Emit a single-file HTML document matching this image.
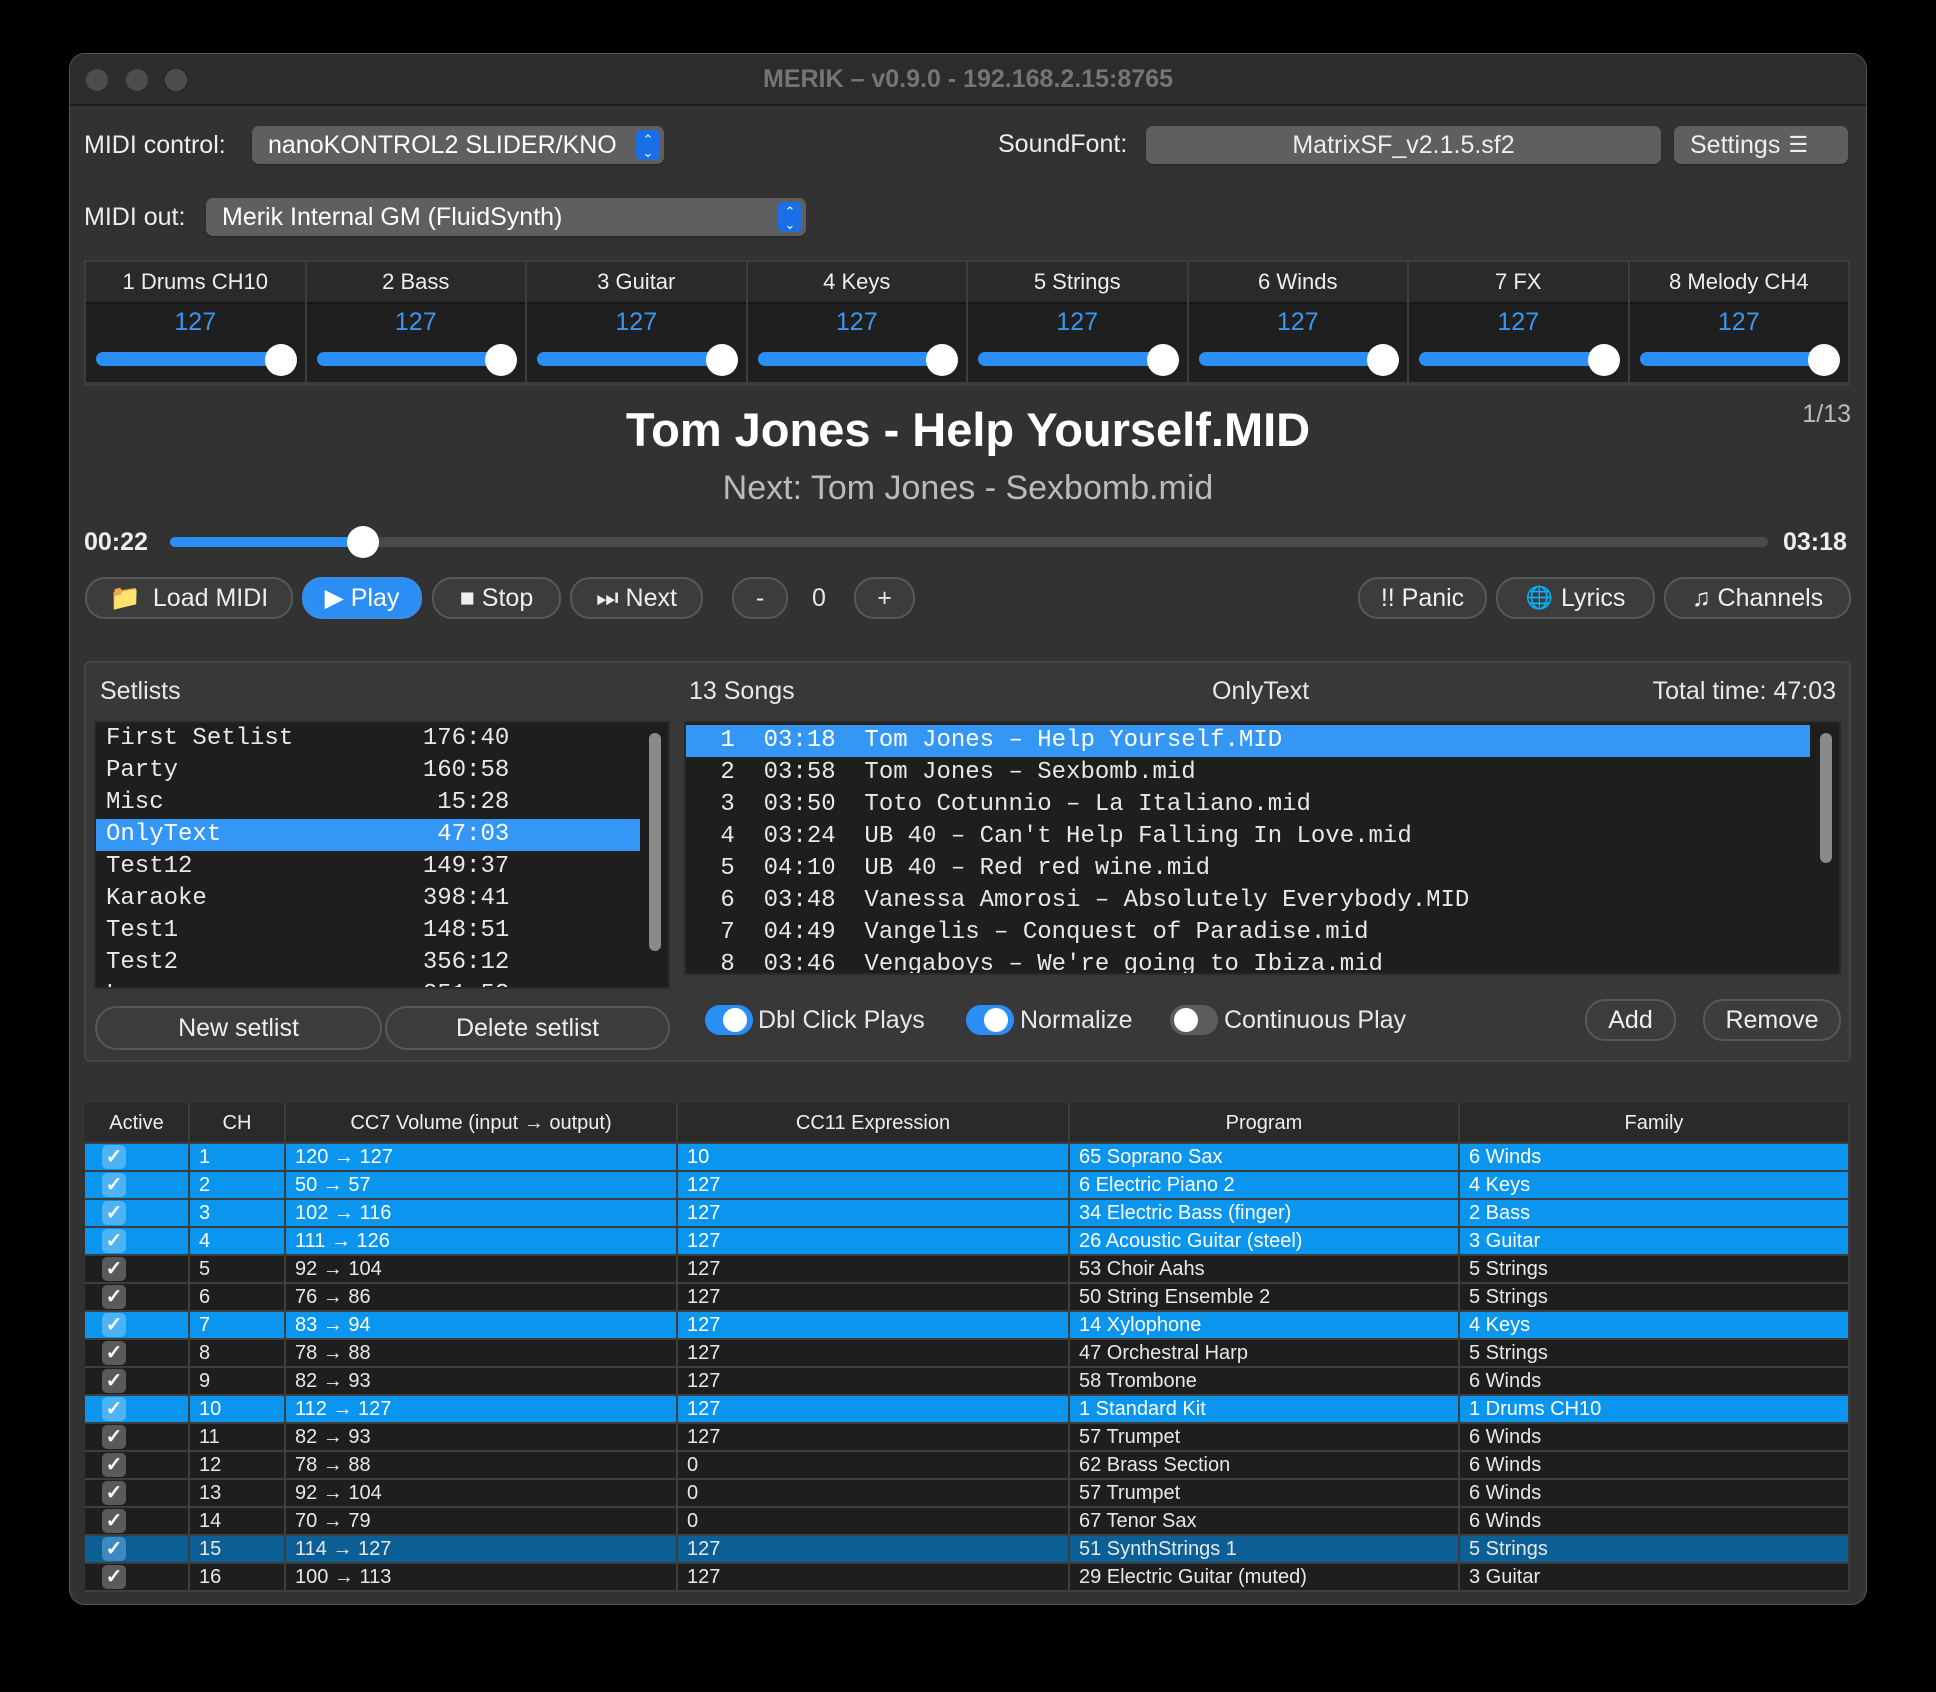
<!DOCTYPE html>
<html><head><meta charset="utf-8"><style>
*{box-sizing:border-box;margin:0;padding:0}
body{width:1936px;height:1692px;background:#000;font-family:"Liberation Sans",sans-serif;color:#e8e8e8;position:relative;overflow:hidden}
.a{position:absolute}
.win{left:69px;top:53px;width:1798px;height:1552px;background:#323232;border-radius:16px;border:1px solid #555;overflow:hidden}
.tb{left:0;top:0;width:100%;height:52px;background:#2c2c2c;border-bottom:2px solid #1a1a1a}
.dot{width:22px;height:22px;border-radius:50%;background:#4d4d4d;top:15px}
.lbl{font-size:25px;color:#eee}
.dd{background:#5f5f5f;border-radius:7px;font-size:25px;color:#fff;padding-left:16px;display:flex;align-items:center;box-shadow:0 1px 1px #222}
.arr{position:absolute;right:4px;top:4px;width:24px;bottom:4px;background:#1a6ee8;border-radius:5px;color:#fff;font-size:13px;line-height:13px;text-align:center;padding-top:3px}
.btn{border:2px solid #585858;border-radius:20px;background:#3c3c3c;font-size:25px;color:#eee;display:flex;align-items:center;justify-content:center}
.mono{font-family:"Liberation Mono",monospace;font-size:24px;white-space:pre}
.row{position:absolute;left:0;height:32px;line-height:32px;width:100%;padding-left:10px}
table{border-collapse:collapse;position:absolute;left:85px;top:1103px;width:1765px;font-size:20px}
td,th{border-right:2px solid #3d3d3d;border-bottom:2px solid #3d3d3d;padding:0 9px;height:28px;line-height:24px;text-align:left;white-space:nowrap}
th{height:40px;background:#2a2a2a;font-weight:normal;text-align:center;color:#eee}
tr.b td{background:#0a95ee;color:#fff}
tr.d td{background:#1e1e1e}
tr.c td{background:#0c5f94}
td:first-child{padding-left:17px}
.ck{display:inline-block;width:24px;height:24px;border-radius:5px;background:#5a5a5a;color:#fff;text-align:center;line-height:24px;font-size:20px;font-weight:bold}
tr.b .ck{background:#4db3f5}
tr.c .ck{background:#3d8ac0}
.tg{width:48px;height:30px;border-radius:15px;background:#2b8ef5}
.tg i{position:absolute;left:4px;top:3px;width:24px;height:24px;border-radius:50%;background:#fff}
</style></head><body>
<div class="a win">
 <div class="a tb"></div>
 <div class="a dot" style="left:16px"></div><div class="a dot" style="left:56px"></div><div class="a dot" style="left:95px"></div>
 <div class="a" style="left:0;width:100%;top:11px;text-align:center;font-size:25px;font-weight:bold;color:#757575">MERIK – v0.9.0 - 192.168.2.15:8765</div>
</div>
<div class="a lbl" style="left:84px;top:131px">MIDI control:</div>
<div class="a dd" style="left:252px;top:126px;width:412px;height:38px">nanoKONTROL2 SLIDER/KNO<div class="arr">⌃<br>⌄</div></div>
<div class="a lbl" style="left:998px;top:130px">SoundFont:</div>
<div class="a dd" style="left:1146px;top:126px;width:515px;height:38px;justify-content:center;padding:0;color:#eee">MatrixSF_v2.1.5.sf2</div>
<div class="a dd" style="left:1674px;top:126px;width:174px;height:38px;color:#eee">Settings <span style="margin-left:8px;font-size:22px">☰</span></div>
<div class="a lbl" style="left:84px;top:203px">MIDI out:</div>
<div class="a dd" style="left:206px;top:198px;width:600px;height:38px">Merik Internal GM (FluidSynth)<div class="arr">⌃<br>⌄</div></div>
<div class="a" style="left:84px;top:260px;width:1766px;height:126px;background:#1f1f1f;border:2px solid #3d3d3d;border-bottom:4px solid #3d3d3d">
<div class="a" style="left:0;top:0;width:100%;height:42px;background:#2a2a2a;border-bottom:2px solid #151515"></div>
</div>
<div class="a" style="left:0;width:1936px;top:402px;text-align:center;font-size:47px;font-weight:bold;color:#fff">Tom Jones - Help Yourself.MID</div>
<div class="a" style="left:0;width:1936px;top:469px;text-align:center;font-size:34px;color:#bbb">Next: Tom Jones - Sexbomb.mid</div>
<div class="a" style="right:85px;top:400px;font-size:25px;color:#bbb">1/13</div>
<div class="a" style="left:84px;top:528px;font-size:25px;font-weight:bold;color:#eee">00:22</div>
<div class="a" style="left:1783px;top:528px;font-size:25px;font-weight:bold;color:#eee">03:18</div>
<div class="a" style="left:170px;top:537px;width:1598px;height:10px;border-radius:5px;background:#4a4a4a"></div>
<div class="a" style="left:170px;top:537px;width:195px;height:10px;border-radius:5px;background:#2b8ef5"></div>
<div class="a" style="left:347px;top:526px;width:32px;height:32px;border-radius:50%;background:#fff"></div>
<div class="a btn" style="left:85px;top:577px;width:208px;height:42px"><span style="color:#9aa;margin-right:12px">📁</span>Load MIDI</div>
<div class="a btn" style="left:302px;top:577px;width:120px;height:42px;background:#2b8ef5;border-color:#3a8ee0;color:#fff">▶ Play</div>
<div class="a btn" style="left:432px;top:577px;width:129px;height:42px">■ Stop</div>
<div class="a btn" style="left:570px;top:577px;width:133px;height:42px">⏭ Next</div>
<div class="a btn" style="left:732px;top:577px;width:56px;height:42px">-</div>
<div class="a" style="left:812px;top:584px;font-size:25px">0</div>
<div class="a btn" style="left:854px;top:577px;width:61px;height:42px">+</div>
<div class="a btn" style="left:1358px;top:577px;width:129px;height:42px">!! Panic</div>
<div class="a btn" style="left:1496px;top:577px;width:159px;height:42px"><span style="font-size:22px;margin-right:8px">🌐</span>Lyrics</div>
<div class="a btn" style="left:1664px;top:577px;width:187px;height:42px">♫ Channels</div>
<div class="a" style="left:84px;top:661px;width:1767px;height:401px;background:#383838;border:2px solid #444;border-radius:6px"></div>
<div class="a" style="left:100px;top:677px;font-size:25px">Setlists</div>
<div class="a" style="left:689px;top:677px;font-size:25px">13 Songs</div>
<div class="a" style="left:1212px;top:677px;font-size:25px">OnlyText</div>
<div class="a" style="right:100px;top:677px;font-size:25px">Total time: 47:03</div>
<div class="a mono" style="left:94px;top:721px;width:576px;height:268px;background:#1e1e1e;border:2px solid #2a2a2a;overflow:hidden">
<div class="row" style="top:0">First Setlist         176:40</div>
<div class="row" style="top:32px">Party                 160:58</div>
<div class="row" style="top:64px">Misc                   15:28</div>
<div class="row" style="top:96px;background:#3597f5;width:544px;color:#fff">OnlyText               47:03</div>
<div class="row" style="top:128px">Test12                149:37</div>
<div class="row" style="top:160px">Karaoke               398:41</div>
<div class="row" style="top:192px">Test1                 148:51</div>
<div class="row" style="top:224px">Test2                 356:12</div>
<div class="row" style="top:256px">L                     351:52</div>
<div class="a" style="left:553px;top:10px;width:12px;height:218px;border-radius:6px;background:#8a8a8a"></div>
</div>
<div class="a mono" style="left:684px;top:721px;width:1157px;height:254px;background:#1e1e1e;border:2px solid #2a2a2a;overflow:hidden">
<div class="row" style="top:2px;background:#3597f5;width:1124px;color:#fff;padding-left:20px"> 1  03:18  Tom Jones – Help Yourself.MID</div>
<div class="row" style="top:34px;padding-left:20px"> 2  03:58  Tom Jones – Sexbomb.mid</div>
<div class="row" style="top:66px;padding-left:20px"> 3  03:50  Toto Cotunnio – La Italiano.mid</div>
<div class="row" style="top:98px;padding-left:20px"> 4  03:24  UB 40 – Can't Help Falling In Love.mid</div>
<div class="row" style="top:130px;padding-left:20px"> 5  04:10  UB 40 – Red red wine.mid</div>
<div class="row" style="top:162px;padding-left:20px"> 6  03:48  Vanessa Amorosi – Absolutely Everybody.MID</div>
<div class="row" style="top:194px;padding-left:20px"> 7  04:49  Vangelis – Conquest of Paradise.mid</div>
<div class="row" style="top:226px;padding-left:20px"> 8  03:46  Vengaboys – We're going to Ibiza.mid</div>
<div class="a" style="left:1134px;top:10px;width:12px;height:130px;border-radius:6px;background:#8a8a8a"></div>
</div>
<div class="a btn" style="left:95px;top:1006px;width:287px;height:44px;border-radius:22px">New setlist</div>
<div class="a btn" style="left:385px;top:1006px;width:285px;height:44px;border-radius:22px">Delete setlist</div>
<div class="a tg" style="left:705px;top:1005px"><i style="left:18px"></i></div>
<div class="a" style="left:758px;top:1006px;font-size:25px">Dbl Click Plays</div>
<div class="a tg" style="left:966px;top:1005px"><i style="left:18px"></i></div>
<div class="a" style="left:1020px;top:1006px;font-size:25px">Normalize</div>
<div class="a tg" style="left:1170px;top:1005px;background:#5c5c5c"><i></i></div>
<div class="a" style="left:1224px;top:1006px;font-size:25px">Continuous Play</div>
<div class="a btn" style="left:1585px;top:999px;width:91px;height:42px">Add</div>
<div class="a btn" style="left:1703px;top:999px;width:138px;height:42px">Remove</div>
<table>
<colgroup><col style="width:104px"><col style="width:96px"><col style="width:392px"><col style="width:392px"><col style="width:390px"><col></colgroup>
<tr><th>Active</th><th>CH</th><th>CC7 Volume (input → output)</th><th>CC11 Expression</th><th>Program</th><th>Family</th></tr>
<tr class="b"><td><span class="ck">✓</span></td><td>1</td><td>120 → 127</td><td>10</td><td>65 Soprano Sax</td><td>6 Winds</td></tr>
<tr class="b"><td><span class="ck">✓</span></td><td>2</td><td>50 → 57</td><td>127</td><td>6 Electric Piano 2</td><td>4 Keys</td></tr>
<tr class="b"><td><span class="ck">✓</span></td><td>3</td><td>102 → 116</td><td>127</td><td>34 Electric Bass (finger)</td><td>2 Bass</td></tr>
<tr class="b"><td><span class="ck">✓</span></td><td>4</td><td>111 → 126</td><td>127</td><td>26 Acoustic Guitar (steel)</td><td>3 Guitar</td></tr>
<tr class="d"><td><span class="ck">✓</span></td><td>5</td><td>92 → 104</td><td>127</td><td>53 Choir Aahs</td><td>5 Strings</td></tr>
<tr class="d"><td><span class="ck">✓</span></td><td>6</td><td>76 → 86</td><td>127</td><td>50 String Ensemble 2</td><td>5 Strings</td></tr>
<tr class="b"><td><span class="ck">✓</span></td><td>7</td><td>83 → 94</td><td>127</td><td>14 Xylophone</td><td>4 Keys</td></tr>
<tr class="d"><td><span class="ck">✓</span></td><td>8</td><td>78 → 88</td><td>127</td><td>47 Orchestral Harp</td><td>5 Strings</td></tr>
<tr class="d"><td><span class="ck">✓</span></td><td>9</td><td>82 → 93</td><td>127</td><td>58 Trombone</td><td>6 Winds</td></tr>
<tr class="b"><td><span class="ck">✓</span></td><td>10</td><td>112 → 127</td><td>127</td><td>1 Standard Kit</td><td>1 Drums CH10</td></tr>
<tr class="d"><td><span class="ck">✓</span></td><td>11</td><td>82 → 93</td><td>127</td><td>57 Trumpet</td><td>6 Winds</td></tr>
<tr class="d"><td><span class="ck">✓</span></td><td>12</td><td>78 → 88</td><td>0</td><td>62 Brass Section</td><td>6 Winds</td></tr>
<tr class="d"><td><span class="ck">✓</span></td><td>13</td><td>92 → 104</td><td>0</td><td>57 Trumpet</td><td>6 Winds</td></tr>
<tr class="d"><td><span class="ck">✓</span></td><td>14</td><td>70 → 79</td><td>0</td><td>67 Tenor Sax</td><td>6 Winds</td></tr>
<tr class="c"><td><span class="ck">✓</span></td><td>15</td><td>114 → 127</td><td>127</td><td>51 SynthStrings 1</td><td>5 Strings</td></tr>
<tr class="d"><td><span class="ck">✓</span></td><td>16</td><td>100 → 113</td><td>127</td><td>29 Electric Guitar (muted)</td><td>3 Guitar</td></tr>
</table>
<div class="a" style="left:86px;top:262px;width:1762px;height:122px;display:flex">
<style>.ch{flex:1;border-right:2px solid #3d3d3d;position:relative}.ch:last-child{border-right:none}.ch .n{height:40px;line-height:40px;text-align:center;font-size:22px;color:#eee}.ch .v{text-align:center;font-size:25px;color:#3a96f0;margin-top:6px}.ch .t{position:absolute;left:10px;right:10px;top:90px;height:14px;border-radius:7px;background:#2b8ef5}.ch .k{position:absolute;right:8px;top:82px;width:32px;height:32px;border-radius:50%;background:#fff}</style>
<div class="ch"><div class="n">1 Drums CH10</div><div class="v">127</div><div class="t"></div><div class="k"></div></div>
<div class="ch"><div class="n">2 Bass</div><div class="v">127</div><div class="t"></div><div class="k"></div></div>
<div class="ch"><div class="n">3 Guitar</div><div class="v">127</div><div class="t"></div><div class="k"></div></div>
<div class="ch"><div class="n">4 Keys</div><div class="v">127</div><div class="t"></div><div class="k"></div></div>
<div class="ch"><div class="n">5 Strings</div><div class="v">127</div><div class="t"></div><div class="k"></div></div>
<div class="ch"><div class="n">6 Winds</div><div class="v">127</div><div class="t"></div><div class="k"></div></div>
<div class="ch"><div class="n">7 FX</div><div class="v">127</div><div class="t"></div><div class="k"></div></div>
<div class="ch"><div class="n">8 Melody CH4</div><div class="v">127</div><div class="t"></div><div class="k"></div></div>
</div>
</body></html>
